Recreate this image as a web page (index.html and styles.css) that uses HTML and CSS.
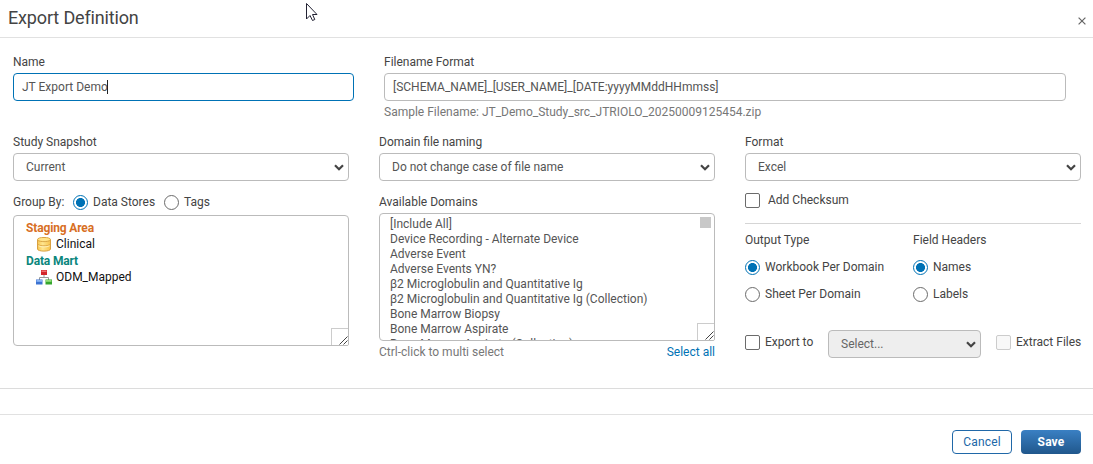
FILE: index.html
```
<!DOCTYPE html>
<html lang="en">
<head>
  <meta charset="UTF-8" />
  <meta name="viewport" content="width=device-width, initial-scale=1.0" />
  <title>Export Definition</title>
  <link rel="stylesheet" href="styles.css">
</head>
<body>
  <div class="dialog-header">
    <h1>Export Definition</h1>
    <svg class="close" width="8" height="8" viewBox="0 0 8 8"><path d="M.6 .6L7.4 7.4M7.4 .6L.6 7.4" /></svg>
  </div>

  <div class="dialog-body">
    <div class="name-row">
      <div class="field">
        <label>Name</label>
        <div class="input focused"><span>JT Export Demo</span><i class="caret"></i></div>
      </div>
      <div class="field">
        <label>Filename Format</label>
        <div class="input"><span>[SCHEMA_NAME]_[USER_NAME]_[DATE:yyyyMMddHHmmss]</span></div>
        <div class="hint">Sample Filename: JT_Demo_Study_src_JTRIOLO_20250009125454.zip</div>
      </div>
    </div>

    <div class="columns">
      <div class="column">
        <label>Study Snapshot</label>
        <div class="select">
          <select><option>Current</option></select>
          <svg class="arrow" width="10" height="7"><path d="M1 1.200L5 5.200L9 1.200" /></svg>
        </div>
        <div class="group-by">
          <span class="group-label">Group By:</span>
          <input type="radio" name="group" checked><span class="stores">Data Stores</span>
          <input type="radio" name="group"><span>Tags</span>
        </div>
        <div class="box tree">
          <div class="tree-title staging">Staging Area</div>
          <div class="tree-item">
            <svg width="16" height="16" viewBox="0 0 16 16">
              <defs>
                <linearGradient id="gold" x1="0" x2="1"><stop offset="0" stop-color="#f8c64f" /><stop offset=".4" stop-color="#ffe690" /><stop offset="1" stop-color="#f7c24a" /></linearGradient>
              </defs>
              <path d="M1.500 3.500C1.500 .8 14.500 .8 14.500 3.500V13C14.500 15.800 1.500 15.800 1.500 13Z" fill="url(#gold)" stroke="#d9a040" />
              <ellipse cx="8" cy="3.500" rx="6" ry="1.500" fill="#ffe48a" />
              <path d="M2 4.500C4 6 12 6 14 4.500M2 8.500C4 10.300 12 10.300 14 8.500" fill="none" stroke="#dba94a" />
              <path d="M2.500 9.800C5 11.300 11 11.300 13.500 9.800" fill="none" stroke="#fff0b8" />
            </svg>
            <span>Clinical</span>
          </div>
          <div class="tree-title mart">Data Mart</div>
          <div class="tree-item">
            <svg width="16" height="16" viewBox="0 0 16 16">
              <path d="M8 6V8.500M3.500 11V8.500H12.500V11" fill="none" stroke="#999" />
              <rect x="5" y="1" width="6" height="5" fill="#d3262b" />
              <rect x="5.500" y="1.500" width="5" height="1.500" fill="#ee7070" />
              <rect x="0" y="10.500" width="6.500" height="5" fill="#3c73d2" />
              <rect x=".5" y="11" width="5.500" height="1.800" fill="#8db7f5" />
              <rect x="9.500" y="10.500" width="6.500" height="5" fill="#35a62d" />
              <rect x="10" y="11" width="5.500" height="1.800" fill="#94de7b" />
            </svg>
            <span>ODM_Mapped</span>
          </div>
          <svg class="grip" width="17" height="17"><path d="M7.500 15.500L15.500 7.500M11.500 15.500L15.500 11.500" /></svg>
        </div>
      </div>

      <div class="column">
        <label>Domain file naming</label>
        <div class="select">
          <select><option>Do not change case of file name</option></select>
          <svg class="arrow" width="10" height="7"><path d="M1 1.200L5 5.200L9 1.200" /></svg>
        </div>
        <label class="domains-label">Available Domains</label>
        <div class="box domains">
          <div>[Include All]</div>
          <div>Device Recording - Alternate Device</div>
          <div>Adverse Event</div>
          <div>Adverse Events YN?</div>
          <div>β2 Microglobulin and Quantitative Ig</div>
          <div>β2 Microglobulin and Quantitative Ig (Collection)</div>
          <div>Bone Marrow Biopsy</div>
          <div>Bone Marrow Aspirate</div>
          <div>Bone Marrow Aspirate (Collection)</div>
          <i class="thumb"></i>
          <svg class="grip" width="17" height="17"><path d="M7.500 15.500L15.500 7.500M11.500 15.500L15.500 11.500" /></svg>
        </div>
        <div class="below">
          <span>Ctrl-click to multi select</span>
          <a>Select all</a>
        </div>
      </div>

      <div class="column">
        <label>Format</label>
        <div class="select">
          <select><option>Excel</option></select>
          <svg class="arrow" width="10" height="7"><path d="M1 1.200L5 5.200L9 1.200" /></svg>
        </div>
        <div class="choice checksum"><input type="checkbox"><span>Add Checksum</span></div>
        <div class="options">
          <div>
            <label>Output Type</label>
            <div class="choice"><input type="radio" name="output" checked><span>Workbook Per Domain</span></div>
            <div class="choice"><input type="radio" name="output"><span>Sheet Per Domain</span></div>
          </div>
          <div>
            <label>Field Headers</label>
            <div class="choice"><input type="radio" name="headers" checked><span>Names</span></div>
            <div class="choice"><input type="radio" name="headers"><span>Labels</span></div>
          </div>
        </div>
        <div class="export-row">
          <div class="choice"><input type="checkbox"><span>Export to</span></div>
          <div class="select">
            <select disabled><option>Select...</option></select>
            <svg class="arrow" width="10" height="7"><path d="M1 1.200L5 5.200L9 1.200" /></svg>
          </div>
          <div class="choice extract"><input type="checkbox" disabled><span>Extract Files</span></div>
        </div>
      </div>
    </div>
  </div>

  <div class="dialog-footer">
    <button class="cancel">Cancel</button>
    <button class="save">Save</button>
  </div>

  <svg class="pointer" width="13" height="20" viewBox="0 0 13 20"><path d="M1.500 1.500V17L5 13.500L7.500 18.500L9.800 17.500L7.500 12.500H12Z" /></svg>
</body>
</html>
```

FILE: styles.css
```
* {
  box-sizing: border-box;
}
body {
  margin: 0;
  height: 464px;
  overflow: hidden;
  background: #fff;
  color: #444;
  font-family: Roboto, sans-serif;
  font-size: 12px;
  line-height: 16px;
}
.dialog-header {
  height: 38px;
  padding: 0 7px 0 8px;
  display: flex;
  justify-content: space-between;
  border-bottom: 1px solid #e1e1e1;
}
h1 {
  margin: 6px 0 0;
  font-size: 18px;
  line-height: 24px;
  font-weight: 400;
  letter-spacing: -0.15px;
}
.close {
  margin-top: 17px;
  stroke: #666;
  stroke-width: 1.2;
}
.dialog-body {
  height: 351px;
  padding: 16px 12px 0 13px;
  border-bottom: 1px solid #dcdcdc;
}
label {
  display: block;
  margin-bottom: 3px;
}
.name-row {
  display: grid;
  grid-template-columns: 341px 682px;
  gap: 30px;
}
.input {
  height: 28px;
  padding: 0 8px;
  display: flex;
  align-items: center;
  border: 1px solid #bbb;
  border-radius: 4px;
  color: #555;
}
.input.focused {
  border-color: #0072b5;
}
.caret {
  width: 1px;
  height: 14px;
  margin-left: -1px;
  background: #222;
}
.hint {
  margin-top: 3px;
  color: #777;
}
.columns {
  display: grid;
  grid-template-columns: repeat(3, 336px);
  gap: 30px;
  margin-top: 14px;
}
.select {
  position: relative;
}
select {
  appearance: none;
  display: block;
  width: 100%;
  height: 28px;
  padding: 0 12px;
  border: 1px solid #bbb;
  border-radius: 4px;
  background: #fff;
  color: #555;
  font: inherit;
}
select:disabled {
  background: #eee;
  color: #666;
  opacity: 1;
}
.arrow {
  position: absolute;
  right: 5px;
  top: 11px;
  fill: none;
  stroke: #444;
  stroke-width: 2.2;
}
input[type="radio"],
input[type="checkbox"] {
  appearance: none;
  flex: none;
  width: 15px;
  height: 15px;
  margin: 0;
  border: 1px solid #6b6b6b;
  background: #fff;
}
input[type="radio"] {
  border-radius: 50%;
}
input[type="checkbox"] {
  border-radius: 2px;
}
input[type="radio"]:checked {
  border-color: #0072b5;
  background: radial-gradient(circle, #0072b5 4.2px, #fff 4.8px);
}
input[type="checkbox"]:disabled {
  border-color: #ccc;
  background: #f8f8f8;
}
.group-by {
  display: flex;
  align-items: center;
  height: 18px;
  margin: 12px 0 4px;
}
.group-by input {
  margin-right: 5px;
}
.group-label {
  width: 60px;
}
.stores {
  width: 71px;
}
.box {
  position: relative;
  overflow: hidden;
  border: 1px solid #bbb;
  border-radius: 4px 4px 2px 4px;
}
.tree {
  height: 131px;
  padding: 4px 12px;
  color: #111;
}
.tree-title {
  font-weight: 700;
  letter-spacing: -0.15px;
}
.staging {
  color: #d86f24;
}
.mart {
  color: #0b867c;
}
.tree-item {
  display: flex;
  align-items: flex-start;
  height: 17px;
  padding-left: 10px;
  gap: 4px;
}
.grip {
  position: absolute;
  right: 0;
  bottom: 0;
  background: #fff;
  border-left: 1px solid #ccc;
  border-top: 1px solid #ccc;
  fill: none;
  stroke: #444;
}
.domains-label {
  margin-top: 13px;
}
.domains {
  height: 128px;
  padding: 3px 10px;
  line-height: 15px;
  color: #555;
}
.thumb {
  position: absolute;
  top: 3px;
  right: 3px;
  width: 11px;
  height: 11px;
  background: #c8c8c8;
}
.below {
  display: flex;
  justify-content: space-between;
  margin-top: 3px;
  color: #777;
}
.below a {
  color: #0072b5;
}
.choice {
  display: flex;
  align-items: center;
  gap: 5px;
  height: 16px;
}
.checksum {
  gap: 8px;
  margin: 11px 0 15px;
}
.options {
  display: grid;
  grid-template-columns: 168px 168px;
  border-top: 1px solid #d5d5d5;
  padding-top: 8px;
}
.options label {
  margin: 0;
}
.options .choice {
  margin-top: 11px;
}
.export-row {
  display: flex;
  margin-top: 28px;
}
.export-row .choice {
  flex: none;
  width: 83px;
  margin-top: 4px;
  white-space: nowrap;
}
.export-row .select {
  flex: none;
  width: 153px;
}
.export-row .extract {
  width: auto;
  margin-left: 15px;
}
.dialog-footer {
  display: flex;
  justify-content: flex-end;
  gap: 9px;
  margin-top: 25px;
  padding: 15px 12px 0;
  border-top: 1px solid #e1e1e1;
}
button {
  width: 60px;
  height: 24px;
  padding: 0;
  border: 1px solid #2068a8;
  border-radius: 4px;
  background: #fff;
  color: #2068a8;
  font: inherit;
  letter-spacing: 0.15px;
}
.save {
  border: 0;
  background: linear-gradient(#3a80c3, #20578c);
  color: #fff;
  font-weight: 700;
}
.pointer {
  position: absolute;
  left: 305px;
  top: 2px;
  fill: #fff;
  stroke: #223;
}
```
